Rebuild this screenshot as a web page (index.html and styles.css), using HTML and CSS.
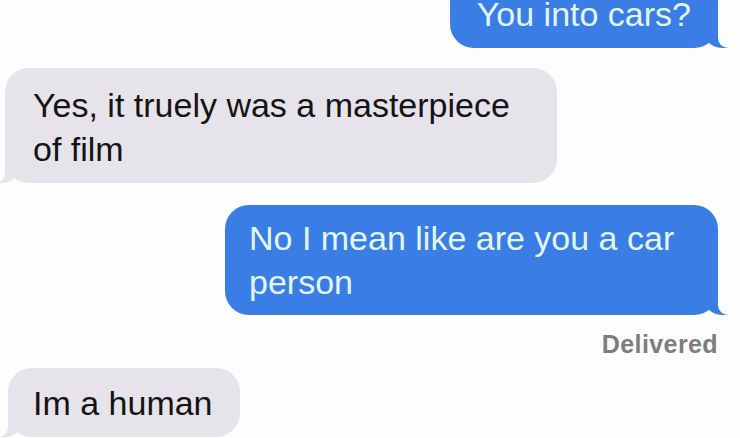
FILE: index.html
```html
<!DOCTYPE html>
<html lang="en">
<head>
<meta charset="utf-8">
<title>Messages</title>
<link rel="stylesheet" href="styles.css">
</head>
<body>
<main class="thread">
  <div class="row row-out first">
    <div class="bubble out b1">You into cars?</div>
  </div>
  <div class="row row-in">
    <div class="bubble in b2">Yes, it truely was a masterpiece of film</div>
  </div>
  <div class="row row-out">
    <div class="bubble out b3">No I mean like are you a car person</div>
  </div>
  <div class="status">Delivered</div>
  <div class="row row-in">
    <div class="bubble in b4">Im a human</div>
  </div>
</main>
</body>
</html>
```

FILE: styles.css
```css
html, body {
  margin: 0;
  padding: 0;
  background: #fdfdfd;
  overflow: hidden;
}

.thread {
  width: 740px;
  height: 438px;
  box-sizing: border-box;
  padding: 0 22px 0 5px;
  display: flex;
  flex-direction: column;
  font-family: "Liberation Sans", Arial, sans-serif;
  font-size: 34px;
  line-height: 44px;
}

.row {
  display: flex;
}

.row-out {
  justify-content: flex-end;
}

.row-in {
  justify-content: flex-start;
}

.first {
  margin-top: -21px;
}

.bubble {
  position: relative;
  box-sizing: border-box;
  padding: 13px 27px 12px 27px;
  border-radius: 24px;
}

.out {
  background: #3a7ee5;
  color: #e2f6f3;
}

.in {
  background: #e6e3ea;
  color: #141414;
}

.out::before,
.out::after,
.in::before,
.in::after {
  content: "";
  position: absolute;
  bottom: 0;
  height: 25px;
}

.out::before {
  right: -11px;
  width: 24px;
  background: #3a7ee5;
  border-bottom-left-radius: 18px 14px;
}

.out::after {
  right: -26px;
  width: 26px;
  background: #fdfdfd;
  border-bottom-left-radius: 10px;
}

.in::before {
  left: -7px;
  width: 20px;
  background: #e6e3ea;
  border-bottom-right-radius: 16px 14px;
}

.in::after {
  left: -26px;
  width: 26px;
  background: #fdfdfd;
  border-bottom-right-radius: 10px;
}

.b2 {
  margin-top: 20px;
  max-width: 552px;
  padding-left: 28px;
  padding-top: 15px;
  padding-bottom: 12px;
}

.b3 {
  margin-top: 22px;
  max-width: 493px;
  padding-left: 24px;
  padding-top: 11px;
  padding-bottom: 11px;
}

.b4 {
  margin-left: 3px;
  padding-left: 25px;
  padding-top: 13px;
}

.status {
  align-self: flex-end;
  margin-top: 15px;
  height: 38px;
  font-size: 25px;
  line-height: 28px;
  font-weight: 700;
  color: #7d7d80;
  letter-spacing: 0.4px;
}
```
